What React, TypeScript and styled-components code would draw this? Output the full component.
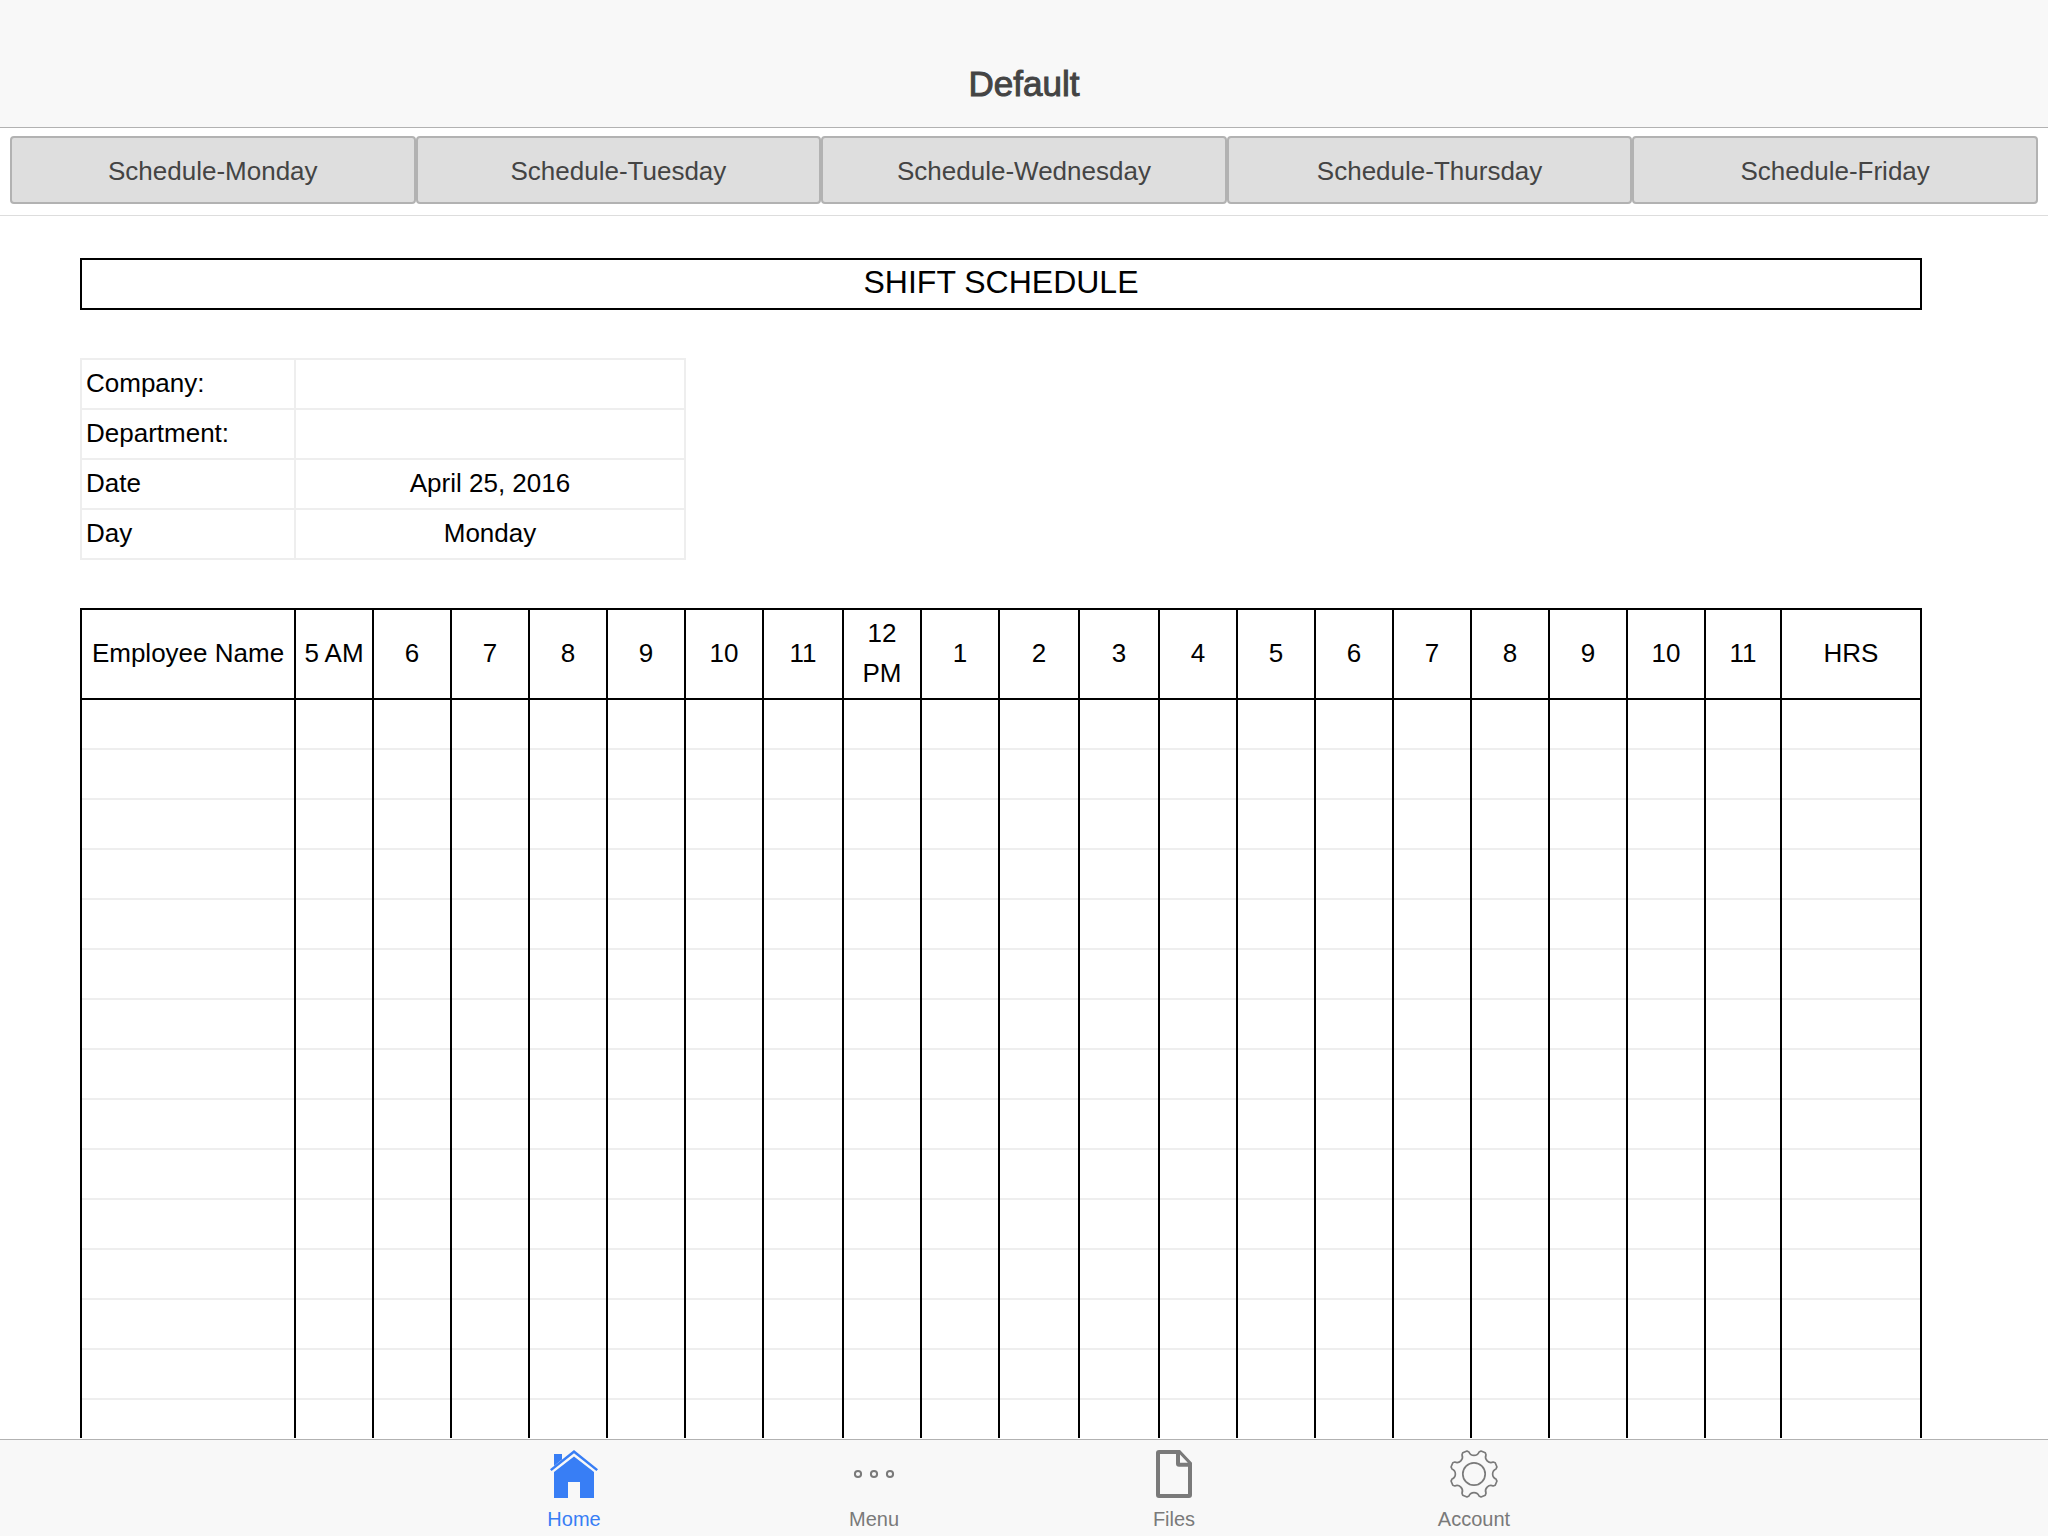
import React, { useState } from "react";
import styled, { createGlobalStyle } from "styled-components";

const GlobalStyle = createGlobalStyle`
  *, *::before, *::after { box-sizing: border-box; }
  html, body { margin: 0; padding: 0; background: #fff; }
  body, button { font-family: "Liberation Sans", Arial, Helvetica, sans-serif; }
`;

const Screen = styled.div`
  display: flex;
  flex-direction: column;
  height: 100vh;
  color: #000;
`;

const Header = styled.header`
  display: flex;
  justify-content: center;
  align-items: center;
  flex: none;
  padding: 64px 20px 23px;
  background: #f8f8f8;
  border-bottom: 1px solid #b2b2b2;
`;

const PageTitle = styled.h1`
  margin: 0;
  font-size: 35px;
  line-height: 40px;
  font-weight: 400;
  color: #444;
  -webkit-text-stroke: 1px #444;
`;

const DayBar = styled.nav`
  display: flex;
  flex: none;
  padding: 8px 10px 11px;
  border-bottom: 1px solid #ddd;
`;

const DayButton = styled.button`
  flex: 1 1 0;
  height: 68px;
  padding: 2px 12px 0;
  font-size: 26px;
  line-height: 40px;
  color: #444;
  background: #dedede;
  border: 2px solid #b2b2b2;
  border-radius: 4px;
  cursor: pointer;
`;

const Sheet = styled.main`
  display: flex;
  flex-direction: column;
  gap: 48px;
  flex: 1 1 0;
  min-height: 0;
  padding: 42px 126px 0 80px;
  overflow: auto;
  scrollbar-width: none;
`;

const SheetTitle = styled.h2`
  flex: none;
  margin: 0;
  padding: 2px 4px 6px;
  border: 2px solid #000;
  font-size: 32px;
  line-height: 40px;
  font-weight: 400;
  text-align: center;
`;

const Table = styled.table<{ $width: string }>`
  flex: none;
  width: ${(p) => p.$width};
  table-layout: fixed;
  border-collapse: separate;
  border-spacing: 0;
  font-size: 26px;
  line-height: 40px;
`;

const InfoTable = styled(Table)`
  border-top: 2px solid #eee;
  border-left: 2px solid #eee;
`;

const InfoLabel = styled.th`
  height: 50px;
  padding: 3px 4px 5px;
  border: solid #eee;
  border-width: 0 2px 2px 0;
  font-weight: 400;
  text-align: left;
`;

const InfoValue = styled(InfoLabel).attrs({ as: "td" })`
  text-align: center;
`;

const ShiftTable = styled(Table)`
  border-top: 2px solid #000;
  border-left: 2px solid #000;
`;

const HourHead = styled.th`
  height: 90px;
  padding: 3px 4px 5px;
  border: solid #000;
  border-width: 0 2px 2px 0;
  font-weight: 400;
  vertical-align: middle;
`;

const ShiftCell = styled.td`
  height: 50px;
  padding: 0;
  border-right: 2px solid #000;

  &::after {
    content: "";
    display: block;
    height: 50px;
    border-bottom: 2px solid #eee;
  }
`;

const TabBar = styled.nav`
  display: flex;
  justify-content: center;
  flex: none;
  margin-top: 1px;
  background: #f8f8f8;
  border-top: 1px solid #b2b2b2;
`;

const Tab = styled.button<{ $active: boolean }>`
  display: flex;
  flex-direction: column;
  align-items: center;
  gap: 9px;
  flex: 0 1 300px;
  padding: 10px 0 5px;
  border: 0;
  background: none;
  font-size: 20px;
  line-height: 24px;
  color: ${(p) => (p.$active ? "#387ef5" : "#7a7a7a")};
  cursor: pointer;
`;

const Icon = styled.svg.attrs({ viewBox: "0 0 48 48", "aria-hidden": true })`
  display: block;
  width: 48px;
  height: 48px;
  fill: currentColor;
`;

const HomeIcon = () => (
  <Icon>
    <path d="M24 0 48 19.2 46.4 21 24 3.2 1.6 21 0 19.2Z" />
    <path d="M4 4h8v5.6L4 16Z" />
    <path d="M24 6.4 44 22v26H30V32H18v16H4V22Z" />
  </Icon>
);

const MoreIcon = () => (
  <Icon>
    {[8, 24, 40].map((cx) => (
      <circle key={cx} cx={cx} cy="24" r="3.1" fill="none" stroke="currentColor" strokeWidth="2" />
    ))}
  </Icon>
);

const FileIcon = () => (
  <Icon>
    <path
      fillRule="evenodd"
      d="M9 0h21l12 12.7V45a3 3 0 0 1-3 3H9a3 3 0 0 1-3-3V3a3 3 0 0 1 3-3ZM10 4v40h28V16.7h-9a3 3 0 0 1-3-3V4ZM30 4.6v8.1h7.8Z"
    />
  </Icon>
);

// Eight teeth with a scooped valley at every 45 degrees.
const polar = (radius: number, degrees: number) => {
  const a = (degrees * Math.PI) / 180;
  return `${(24 + radius * Math.sin(a)).toFixed(2)} ${(24 - radius * Math.cos(a)).toFixed(2)}`;
};

const gearPath =
  Array.from({ length: 8 }, (_, i) => {
    const a = i * 45;
    return [
      `${i === 0 ? "M" : "L"}${polar(22.6, a - 13)}`,
      `A5.5 5.5 0 0 0 ${polar(22.6, a + 13)}`,
      `L${polar(24, a + 17)}`,
      `L${polar(24, a + 28)}`,
    ].join("");
  }).join("") + "Z";

const GearIcon = () => (
  <Icon overflow="visible">
    <g fill="none" stroke="currentColor" strokeWidth="1.7" strokeLinejoin="round">
      <path d={gearPath} />
      <circle cx="24" cy="24" r="11.2" />
    </g>
  </Icon>
);

const days = ["Monday", "Tuesday", "Wednesday", "Thursday", "Friday"];

const info = [
  ["Company:", ""],
  ["Department:", ""],
  ["Date", "April 25, 2016"],
  ["Day", "Monday"],
];

const columns: [string, number][] = [
  ["Employee Name", 214],
  ["5 AM", 78],
  ["6", 78],
  ["7", 78],
  ["8", 78],
  ["9", 78],
  ["10", 78],
  ["11", 80],
  ["12 PM", 78],
  ["1", 78],
  ["2", 80],
  ["3", 80],
  ["4", 78],
  ["5", 78],
  ["6", 78],
  ["7", 78],
  ["8", 78],
  ["9", 78],
  ["10", 78],
  ["11", 76],
  ["HRS", 140],
];

const tabs = [
  { name: "Home", Glyph: HomeIcon },
  { name: "Menu", Glyph: MoreIcon },
  { name: "Files", Glyph: FileIcon },
  { name: "Account", Glyph: GearIcon },
];

const rowCount = 20;

export default function App() {
  const [tab, setTab] = useState("Home");

  return (
    <Screen>
      <GlobalStyle />
      <Header>
        <PageTitle>Default</PageTitle>
      </Header>
      <DayBar aria-label="Schedules">
        {days.map((day) => (
          <DayButton key={day} type="button">
            Schedule-{day}
          </DayButton>
        ))}
      </DayBar>
      <Sheet>
        <SheetTitle>SHIFT SCHEDULE</SheetTitle>
        <InfoTable $width="606px">
          <colgroup>
            <col width={214} />
            <col width={390} />
          </colgroup>
          <tbody>
            {info.map(([label, value]) => (
              <tr key={label}>
                <InfoLabel scope="row">{label}</InfoLabel>
                <InfoValue>{value}</InfoValue>
              </tr>
            ))}
          </tbody>
        </InfoTable>
        <ShiftTable $width="100%">
          <colgroup>
            {columns.map(([, width], i) => (
              <col key={i} width={width} />
            ))}
          </colgroup>
          <thead>
            <tr>
              {columns.map(([label], i) => (
                <HourHead key={i} scope="col">
                  {label}
                </HourHead>
              ))}
            </tr>
          </thead>
          <tbody>
            {Array.from({ length: rowCount }, (_, row) => (
              <tr key={row}>
                {columns.map((_, i) => (
                  <ShiftCell key={i} />
                ))}
              </tr>
            ))}
          </tbody>
        </ShiftTable>
      </Sheet>
      <TabBar aria-label="Main">
        {tabs.map(({ name, Glyph }) => (
          <Tab key={name} type="button" $active={tab === name} onClick={() => setTab(name)}>
            <Glyph />
            {name}
          </Tab>
        ))}
      </TabBar>
    </Screen>
  );
}
